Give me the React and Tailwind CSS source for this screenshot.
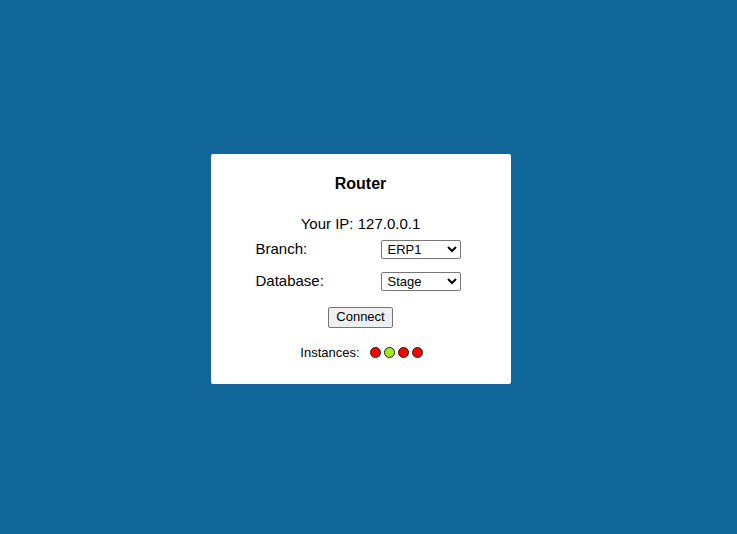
export default function App() {
  const instances = ['#ff0000', '#9ef01a', '#ff0000', '#ff0000'];

  return (
    <div className="min-h-screen w-full bg-[#11679a] flex items-center justify-center font-['Liberation_Sans',Arial,sans-serif] text-black">
      <div className="w-[300px] h-[230px] bg-white rounded-[2px] flex flex-col items-center pt-[21px] mt-[3px] mr-[16px]">
        <h3 className="text-[16px] leading-[18px] font-bold">Router</h3>

        <div className="mt-[22px] text-[15px] leading-[17px]">Your IP: 127.0.0.1</div>

        <div className="mt-[8px] w-[205px] ml-[-5px] flex flex-col gap-[13px]">
          <div className="flex items-start justify-between h-[19px] text-[15px]">
            <label className="leading-[18px]">Branch:</label>
            <select
              defaultValue="ERP1"
              className="w-[80px] h-[19px] text-[13px] leading-[16px] border border-[#767676] rounded-[2px] bg-white pl-[2px]"
            >
              <option>ERP1</option>
              <option>ERP2</option>
            </select>
          </div>
          <div className="flex items-start justify-between h-[19px] text-[15px]">
            <label className="leading-[18px]">Database:</label>
            <select
              defaultValue="Stage"
              className="w-[80px] h-[19px] text-[13px] leading-[16px] border border-[#767676] rounded-[2px] bg-white pl-[2px]"
            >
              <option>Stage</option>
              <option>Production</option>
            </select>
          </div>
        </div>

        <button className="mt-[16px] h-[21px] px-[7px] text-[13px] leading-[16px] bg-[#efefef] border border-[#767676] rounded-[2px]">
          Connect
        </button>

        <div className="mt-[17px] ml-[2px] flex items-center text-[13px] leading-[15px]">
          <span>Instances:</span>
          <div className="ml-[10px] mt-[1px] flex gap-[3px]">
            {instances.map((c, i) => (
              <span
                key={i}
                className="block w-[11px] h-[11px] rounded-full border border-[#222]"
                style={{ backgroundColor: c }}
              />
            ))}
          </div>
        </div>
      </div>
    </div>
  );
}
